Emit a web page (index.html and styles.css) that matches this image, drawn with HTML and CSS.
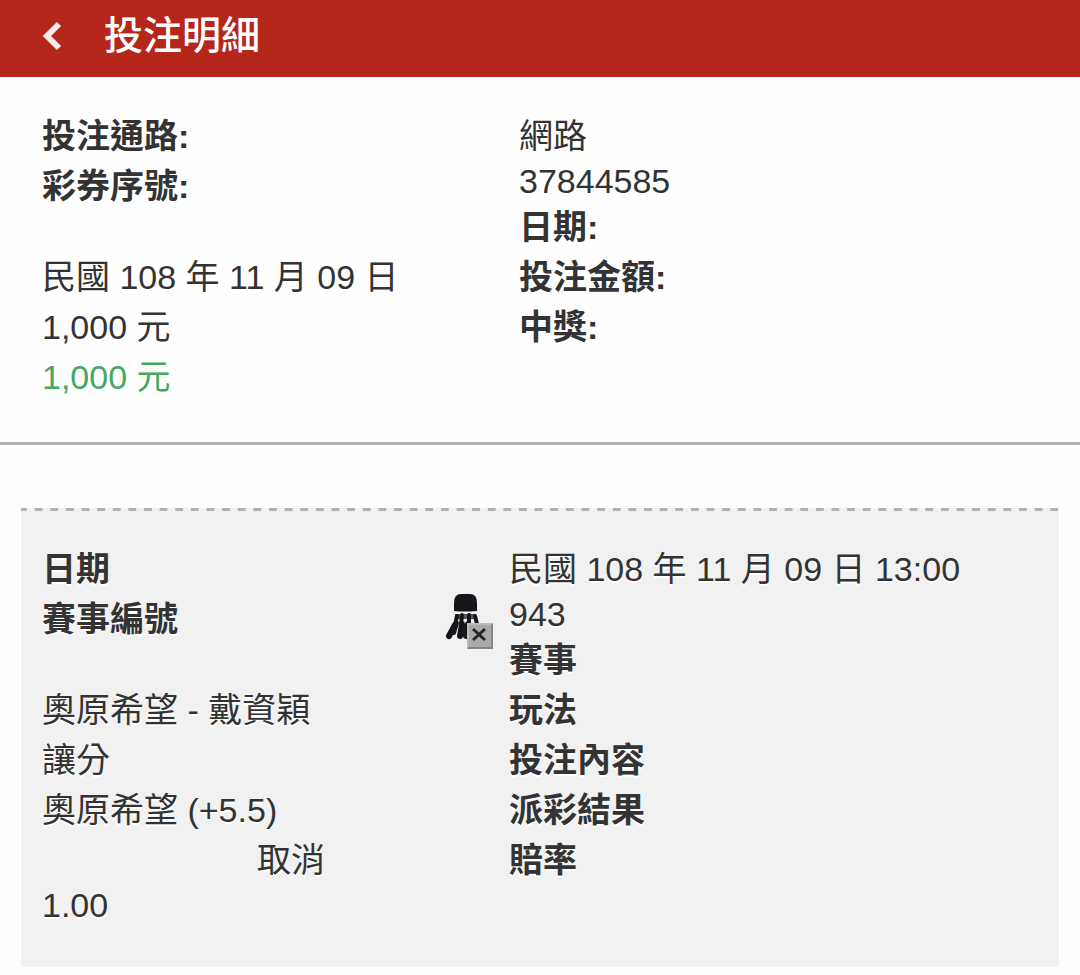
FILE: index.html
```html
<!DOCTYPE html>
<html lang="zh-Hant">
<head>
<meta charset="utf-8">
<meta name="viewport" content="width=device-width, initial-scale=1">
<title>投注明細</title>
<link rel="stylesheet" href="styles.css">
</head>
<body>
<header class="topbar">
  <button class="back" type="button" aria-label="返回">
    <svg width="20" height="32" viewBox="0 0 20 32" aria-hidden="true"><path d="M17 4 5 16 17 28" fill="none" stroke="currentColor" stroke-width="6"/></svg>
  </button>
  <h1 class="title">投注明細</h1>
</header>
<main>
  <section class="summary">
    <div class="column">
      <p class="line label">投注通路:</p>
      <p class="line label">彩券序號:</p>
      <p class="line short"></p>
      <p class="line">民國 108 年 11 月 09 日</p>
      <p class="line">1,000 元</p>
      <p class="line win">1,000 元</p>
    </div>
    <div class="column">
      <p class="line">網路</p>
      <p class="line short">37844585</p>
      <p class="line label">日期:</p>
      <p class="line label">投注金額:</p>
      <p class="line label">中獎:</p>
    </div>
  </section>
  <section class="card">
    <div class="column">
      <p class="line label">日期</p>
      <div class="line label sport">
        <span>賽事編號</span>
        <svg class="shuttle" width="50" height="58" viewBox="0 0 50 58" role="img" aria-label="羽球">
          <path d="M9 17V9Q9 0 16 0H25Q32 0 32 9V17Q20 18 9 17Z" fill="#15151a"/>
          <path d="M10 20H31L32 25H10Z" fill="#55555a"/>
          <g fill="none" stroke="#15151a" stroke-linecap="round">
            <path d="M12 22 10 31M17 21 16 31M24 21V30M30 22 32 30" stroke-width="4"/>
            <path d="M10 31 4 42M17 30 15 42M23 30 21 42" stroke-width="6"/>
            <path d="M12 29 9 39" stroke-width="4"/>
          </g>
          <path d="M22 29H48V55H22Z" fill="#a9a9a9"/>
          <path d="M23 54V30H47" fill="none" stroke="#bcbcbc" stroke-width="2"/>
          <path d="M23 54H47V30" fill="none" stroke="#858585" stroke-width="2"/>
          <path d="M28 35 40 46M40 35 28 46" fill="none" stroke="#27272b" stroke-width="3"/>
        </svg>
      </div>
      <p class="line short"></p>
      <p class="line">奧原希望 - 戴資穎</p>
      <p class="line">讓分</p>
      <p class="line">奧原希望 (+5.5)</p>
      <p class="line result">取消</p>
      <p class="line short">1.00</p>
    </div>
    <div class="column">
      <p class="line">民國 108 年 11 月 09 日 13:00</p>
      <p class="line short">943</p>
      <p class="line label">賽事</p>
      <p class="line label">玩法</p>
      <p class="line label">投注內容</p>
      <p class="line label">派彩結果</p>
      <p class="line label">賠率</p>
    </div>
  </section>
</main>
</body>
</html>
```
FILE: styles.css
```css
* {
  box-sizing: border-box;
}

body {
  margin: 0;
  background: #fefefe;
  color: #333;
  font-family: "Liberation Sans", "Noto Sans CJK TC", sans-serif;
  font-size: 34px;
}

.topbar {
  display: flex;
  align-items: center;
  gap: 42px;
  padding: 7px 42px 12px;
  background: #b5261b;
  color: #fff;
}

.back {
  display: flex;
  padding: 0;
  border: 0;
  background: none;
  color: #f8e8e6;
}

.title {
  margin: 0;
  font-size: 39px;
  font-weight: 500;
  line-height: 58px;
}

.summary {
  display: grid;
  grid-template-columns: 477fr 519fr;
  padding: 34px 42px 40px;
  border-bottom: 3px solid #b1b1b1;
}

.card {
  display: grid;
  grid-template-columns: 467fr 529fr;
  margin: 63px 21px 8px;
  padding: 36px 21px 41px;
  background: linear-gradient(90deg, #b1b1b1 6px, transparent 6px calc(100% - 2px), #b1b1b1 calc(100% - 2px)) 0 0 / calc((100% - 6px) / 66) 3px repeat-x #f1f1f1;
  text-shadow: 0 2px 0 #fff;
}

.line {
  margin: 0;
  height: 50px;
  line-height: 50px;
  white-space: nowrap;
}

.short {
  height: 41px;
  line-height: 41px;
}

.label {
  font-weight: 700;
}

.win {
  color: #43a862;
}

.sport {
  display: flex;
  justify-content: space-between;
  padding-right: 14px;
}

.result {
  padding-left: 215px;
}
```
